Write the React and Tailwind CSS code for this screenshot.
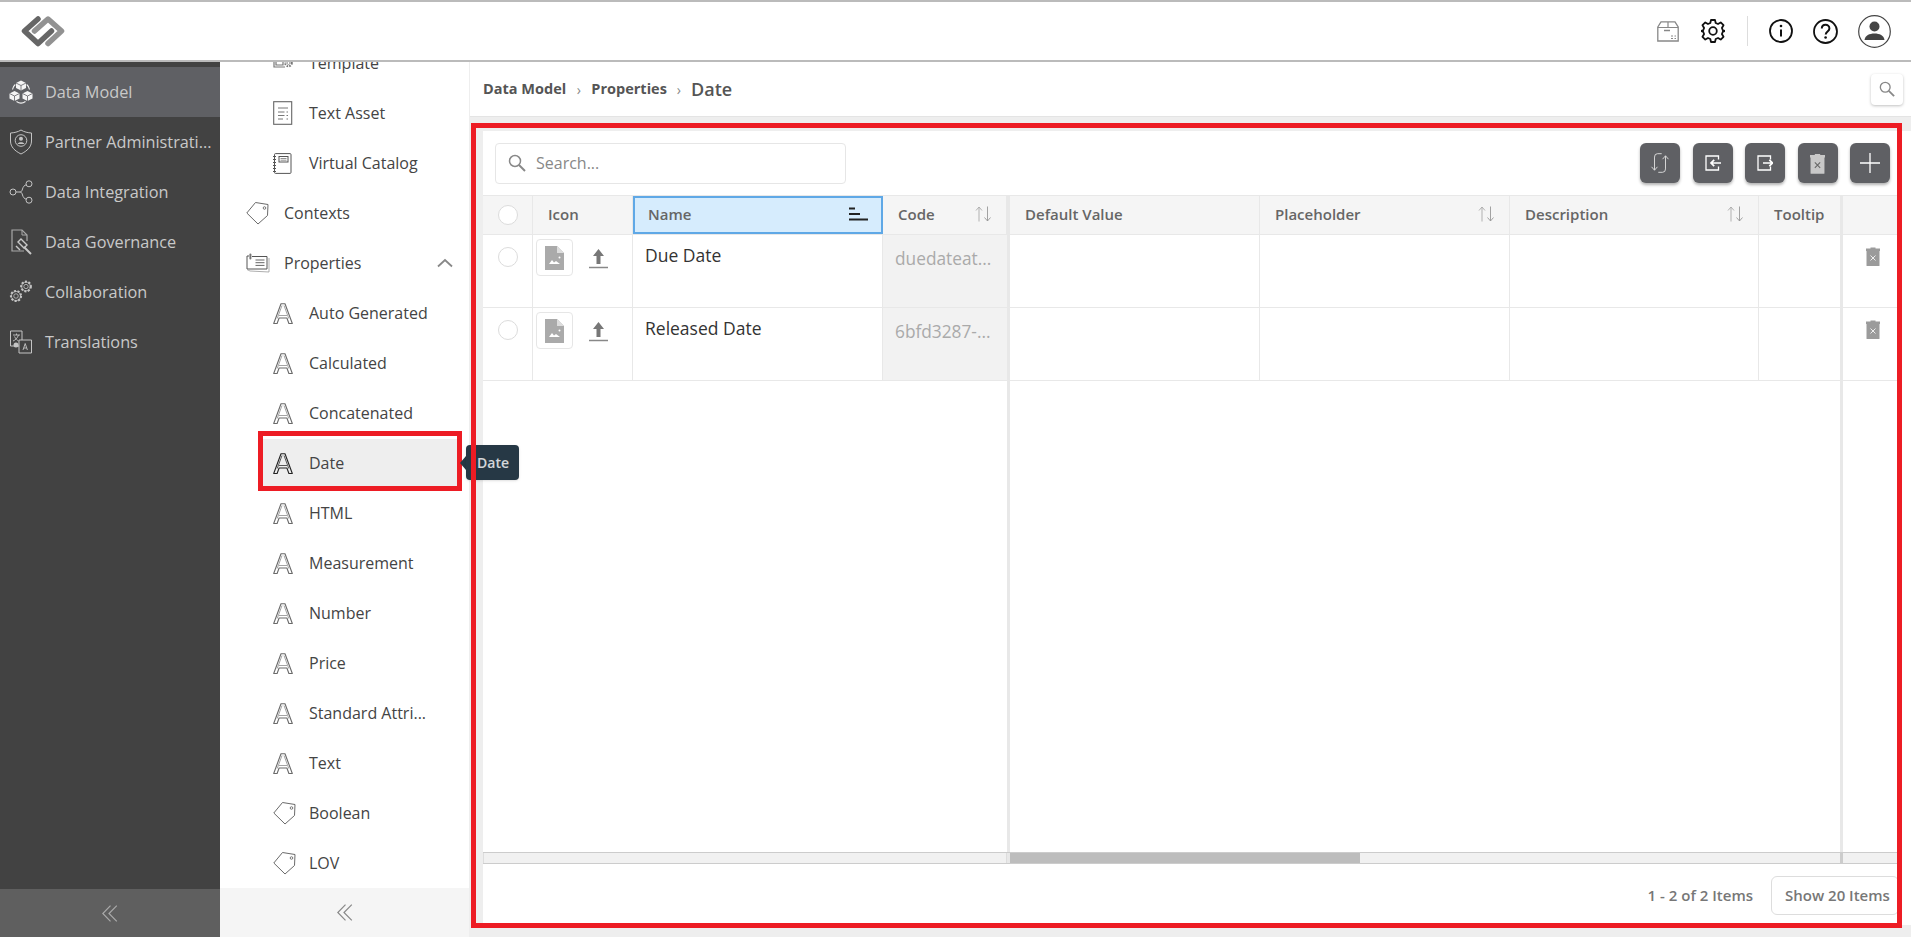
import React from "react";

const S = ({ w, h, vb, children, className = "" }) => (
  <svg width={w} height={h} viewBox={vb} fill="none" className={"shrink-0 " + className}>{children}</svg>
);

const Logo = () => (
  <S w={46} h={32} vb="0 0 46 32">
    <path d="M18 4 4.500 16 18 28.500 31.500 16" stroke="#666" strokeWidth="5.500" strokeLinecap="round" strokeLinejoin="round" />
    <path d="M14.500 16 28 4 41.500 16 28 28.500" stroke="#929292" strokeWidth="5.500" strokeLinecap="round" strokeLinejoin="round" />
  </S>
);

const Cube = ({ x, y }) => (
  <g transform={`translate(${x} ${y})`}>
    <path d="M5 0l5 2.500v5L5 10 0 7.500v-5z" fill="#f4f4f4" />
    <path d="M0 2.500 5 5l5-2.500M5 5v5" stroke="#5f6064" strokeWidth=".8" />
  </g>
);
const IcCubes = () => (
  <S w={24} h={24} vb="0 0 24 24">
    <Cube x={7} y={0.5} />
    <Cube x={0.5} y={11} />
    <Cube x={13.5} y={11} />
    <path d="M3.500 9.500C4 7 5 5.500 6.300 4.500M20.500 9.500C20 7 19 5.500 17.700 4.500M7.500 21.500c3 2.200 6 2.200 9 0" stroke="#f4f4f4" strokeWidth="1.100" />
  </S>
);
const IcShield = () => (
  <S w={24} h={26} vb="0 0 24 26">
    <path d="M12 1c3 2 7 2.800 10.500 3v8c0 6-4.500 10-10.500 13C6 22 1.500 18 1.500 12V4C5 3.800 9 3 12 1z" stroke="#c4c4c4" strokeWidth="1" />
    <circle cx="12" cy="11.500" r="5.800" stroke="#c4c4c4" strokeWidth="1" />
    <circle cx="12" cy="9.800" r="2" fill="#c4c4c4" />
    <path d="M8.600 15c.5-2.300 6.300-2.300 6.800 0z" fill="#c4c4c4" />
  </S>
);
const IcShare = () => (
  <S w={24} h={24} vb="0 0 24 24">
    <circle cx="4" cy="12" r="3" stroke="#c4c4c4" />
    <circle cx="20" cy="3.800" r="3" stroke="#c4c4c4" />
    <circle cx="20" cy="20.200" r="3" stroke="#c4c4c4" />
    <path d="M7 12h3.500c2 0 2.500-1 3-3 .5-2 2-4 3.700-4.200M10.500 12c2 0 2.500 1 3 3 .5 2 2 4 3.700 4.200" stroke="#c4c4c4" />
  </S>
);
const IcGov = () => (
  <S w={24} h={26} vb="0 0 24 26">
    <path d="M15 22H3V1h10l5 5v6" stroke="#a8a8a8" strokeWidth="1.200" />
    <path d="M13 1v5h5" stroke="#a8a8a8" />
    <path d="M12 10l6 6-3 3-6-6z" stroke="#c8c8c8" strokeWidth="1.400" />
    <path d="M15 18l7 7" stroke="#c8c8c8" strokeWidth="2" />
    <path d="M7 17l4 4" stroke="#c8c8c8" strokeWidth="1.500" />
  </S>
);
const Gear = ({ cx, cy, r }) => (
  <g stroke="#c4c4c4">
    <circle cx={cx} cy={cy} r={r} strokeWidth="2.200" strokeDasharray="2 1.500" />
    <circle cx={cx} cy={cy} r={r - 0.4} strokeWidth="0.800" />
    <circle cx={cx} cy={cy} r={r * 0.45} strokeWidth="0.800" />
  </g>
);
const IcCollab = () => (
  <S w={24} h={24} vb="0 0 24 24">
    <Gear cx={7} cy={16} r={5} />
    <Gear cx={17} cy={6.500} r={4.800} />
  </S>
);
const IcTranslate = () => (
  <S w={24} h={24} vb="0 0 24 24">
    <path d="M10 16H1.500V1H13v9" stroke="#c4c4c4" />
    <path d="M10 10h12.500v13H10z" stroke="#c4c4c4" />
    <path d="M4 5h7M7.500 3.500V5M9.500 5C8.500 8 6.500 10 4 11M5.500 6.500c1 2 2.500 3.500 4 4.500" stroke="#c4c4c4" strokeWidth=".9" />
    <path d="M14 20l2.200-6.500 2.200 6.500M14.800 18h2.800" stroke="#c4c4c4" strokeWidth=".9" />
    <circle cx="7" cy="15" r="2.500" fill="#c4c4c4" />
  </S>
);

const IcA = ({ dark }) => {
  const c = dark ? "#222" : "#6a6a6a";
  const d = dark ? "#444" : "#999";
  return (
    <S w={20} h={21} vb="0 0 20 21">
      <path d="M.7 20.500 8 .7h4l7.300 19.800h-3.400l-2-5.500H6.100l-2 5.500z" stroke={c} strokeWidth="1.100" strokeLinejoin="round" />
      <path d="M4.200 15.500l4.800-13M15.800 15.500 11 2.500" stroke={d} strokeWidth=".9" />
      <path d="M6 12.500h8" stroke={d} strokeWidth=".9" />
    </S>
  );
};
const IcTag = () => (
  <S w={24} h={24} vb="0 0 24 24">
    <path d="M.8 12 9.500 1.500l12.500 2-.5 11L12 23z" stroke="#6a6a6a" strokeWidth="1" strokeLinejoin="round" />
    <circle cx="18.500" cy="7" r="1.300" stroke="#6a6a6a" strokeWidth=".9" />
  </S>
);
const IcTemplate = () => (
  <S w={20} h={14} vb="0 0 20 14">
    <path d="M1 0v11h11M3 0v9h7V0" stroke="#777" strokeWidth="1.200" />
    <rect x="5" y="1.500" width="3.500" height="4" stroke="#777" />
    <circle cx="15.500" cy="7" r="3.300" stroke="#777" strokeWidth="2" strokeDasharray="1.600 1.100" />
    <circle cx="15.500" cy="7" r="1.500" stroke="#777" strokeWidth=".7" />
  </S>
);
const IcTextAsset = () => (
  <S w={20} h={24} vb="0 0 20 24">
    <rect x=".7" y=".7" width="18" height="22.600" stroke="#666" strokeWidth="1.100" />
    <path d="M5 7h10M5 11h6.500M13.500 11h1.500M5 14.500h6.500M13.500 14.500h1.500M5 18h5M13.500 18h1.500" stroke="#777" />
  </S>
);
const IcCatalog = () => (
  <S w={19} h={21} vb="0 0 19 21">
    <rect x="1.500" y=".6" width="16.500" height="19.800" rx="1" stroke="#555" />
    <path d="M0 3.500h3M0 6.500h3M0 9.500h3M0 12.500h3M0 15.500h3M0 18.500h3" stroke="#555" />
    <rect x="6" y="3.500" width="9" height="5.500" stroke="#555" />
    <path d="M7.500 5.500h6M7.500 7.200h6" stroke="#777" strokeWidth=".8" />
  </S>
);
const IcProps = () => (
  <S w={24} h={20} vb="0 0 24 20">
    <path d="M3 3H1v13h20V3.500H6" stroke="#555" strokeWidth="1" />
    <path d="M1 16.500l3 1.500 19 1V5" stroke="#999" strokeWidth=".8" />
    <rect x="3.400" y=".5" width="2" height="6" rx="1" fill="#777" />
    <path d="M9.500 7h9M9.500 9.700h9M9.500 12.400h9" stroke="#666" strokeWidth="1" />
  </S>
);
const Chevrons = ({ c }) => (
  <S w={16} h={17} vb="0 0 16 17">
    <path d="M8.500.6.800 8.500l7.700 7.900M14.800.6 7 8.500l7.800 7.900" stroke={c} strokeWidth="1.200" />
  </S>
);

const Glass = ({ c, s = 18 }) => (
  <S w={s} h={s} vb="0 0 18 18">
    <circle cx="7" cy="7" r="5.500" stroke={c} strokeWidth="1.500" />
    <path d="M11 11l6 6" stroke={c} strokeWidth="2" />
  </S>
);

const SortIcon = () => (
  <S w={17} h={16} vb="0 0 17 16">
    <path d="M4 15.500V1M1 4.500 4 1l3 3.500" stroke="#aaa" strokeWidth=".9" />
    <path d="M12.500.5V15M9.500 11.500l3 3.500 3-3.500" stroke="#999" strokeWidth=".9" />
  </S>
);
const SortActive = () => (
  <S w={20} h={14} vb="0 0 20 14">
    <path d="M0 1.500h6M0 7h11M0 12.500h19" stroke="#222" strokeWidth="2" />
  </S>
);

const Trash = ({ c = "#9b9b9b", x = "#eee", w = 14, h = 19 }) => (
  <S w={w} h={h} vb="0 0 14 19">
    <path d="M4.500 1.600V.6h5v1h4.500v2.400H0V1.600z" fill={c} />
    <rect x=".5" y="3" width="13" height="16" rx=".5" fill={c} />
    <path d="M4.500 8.500l5 5M9.500 8.500l-5 5" stroke={x} strokeWidth="1" />
  </S>
);

const Nav = ({ icon, label, active }) => (
  <div className={"flex items-center h-[50px] pl-[9px] gap-[12px] text-[16.250px] text-[#c9c9c9] " + (active ? "bg-[#5f6064]" : "")}>
    {icon}
    <span className="whitespace-nowrap">{label}</span>
  </div>
);

const Sub = ({ icon, label }) => (
  <div className="flex items-center h-[50px] pl-[53px] text-[16px] text-[#444]">
    <span className="w-[36px] flex">{icon}</span>
    <span className="whitespace-nowrap">{label}</span>
  </div>
);
const Top = ({ icon, label, chevron }) => (
  <div className="flex items-center h-[50px] pl-[26px] text-[16px] text-[#444]">
    <span className="w-[38px] flex">{icon}</span>
    <span className="whitespace-nowrap">{label}</span>
    {chevron && (
      <S w={16} h={10} vb="0 0 16 10" className="ml-auto mr-[16px]">
        <path d="M1 8.500 8 2l7 6.500" stroke="#888" strokeWidth="1.800" />
      </S>
    )}
  </div>
);

const cols = "grid grid-cols-[50px_100px_250px_124px_3px_250px_250px_249px_81px_3px_56px]";

const Head = ({ label, sort, last }) => (
  <div className={"flex items-center justify-between pl-[15px] pr-[14px] pb-[2px] text-[15px] font-semibold text-[#666] whitespace-nowrap " + (last ? "" : "border-r border-[#e8e8e8]")}>
    <span>{label}</span>
    {sort && <SortIcon />}
  </div>
);

const Radio = () => <div className="w-[20px] h-[20px] rounded-full border border-[#dcdcdc] bg-white" />;

const ImgFile = () => (
  <S w={19} h={24} vb="0 0 19 24">
    <path d="M0 0h12l7 7v17H0z" fill="#aaa" />
    <path d="M12 0l7 7h-7z" fill="#ddd" />
    <path d="M4 18l3-4 2 2.500 2-1.500 4 3z" fill="#fff" />
    <circle cx="14.500" cy="11.500" r="1" fill="#fff" />
  </S>
);
const Upload = () => (
  <S w={19} h={20} vb="0 0 19 20">
    <path d="M9.500 0 15 7h-3.500v8h-4V7H4z" fill="#777" />
    <path d="M0 18.500h19" stroke="#888" strokeWidth="1.500" />
  </S>
);

const Row = ({ name, code }) => (
  <div className={cols + " h-[73px] border-b border-[#e8e8e8]"}>
    <div className="border-r border-[#e8e8e8] flex justify-center pt-[12px]"><Radio /></div>
    <div className="border-r border-[#e8e8e8] flex pl-[3px] pt-[4px] gap-[16px] items-start">
      <div className="w-[37px] h-[37px] rounded border border-[#e6e6e6] flex items-center justify-center"><ImgFile /></div>
      <div className="pt-[10px]"><Upload /></div>
    </div>
    <div className="border-r border-[#e8e8e8] pl-[12px] pt-[7px] text-[17.500px] text-[#333] whitespace-nowrap">{name}</div>
    <div className="bg-[#f2f2f2] pl-[12px] pt-[11px] text-[17.300px] text-[#aaa] whitespace-nowrap">{code}</div>
    <div className="bg-[#e8e8e8]" />
    <div className="border-r border-[#e8e8e8]" />
    <div className="border-r border-[#e8e8e8]" />
    <div className="border-r border-[#e8e8e8]" />
    <div />
    <div className="bg-[#e8e8e8]" />
    <div className="flex justify-center pt-[12px] pl-[3px]"><Trash /></div>
  </div>
);

const ToolBtn = ({ children }) => (
  <div className="w-[40px] h-[40px] rounded-md bg-[#5f6064] shadow-[0_2px_3px_rgba(0,0,0,0.3)] flex items-center justify-center">{children}</div>
);

export default function App() {
  return (
    <div className="relative h-[937px] w-[1911px] overflow-hidden flex flex-col bg-[#eee] font-['Open_Sans',sans-serif]">
      <header className="h-[62px] shrink-0 bg-white border-t-2 border-b-2 border-t-[#bbb] border-b-[#bbb] flex items-center pl-[20px] pr-[20px]">
        <Logo />
        <div className="ml-auto flex items-center">
          <S w={22} h={21} vb="0 0 22 21">
            <path d="M.8 6 4 .8h14L21.200 6v14H.8z" stroke="#888" strokeWidth="1.300" />
            <path d="M.8 6.500h20.400M11 1v5.500" stroke="#888" strokeWidth="1.200" />
            <path d="M7 9.500h6" stroke="#888" strokeWidth="1.500" />
            <path d="M14 15h2M17.500 15h1.500M14 17.500h2M17.500 17.500h1.500" stroke="#888" />
          </S>
          <S w={24} h={24} vb="0 0 24 24" className="ml-[22px]">
            <path d="M10 1h4l.7 3 2.300 1 2.700-1.600 2.800 2.800L20.900 9l1 2.300 2 .7v0l-2 .7-1 2.300 1.600 2.800-2.800 2.800-2.700-1.600-2.300 1-.7 3h-4l-.7-3-2.300-1-2.700 1.600-2.800-2.800L3.100 15l-1-2.300-2-.7v0l2-.7 1-2.300-1.600-2.800 2.800-2.800L7 5l2.300-1z" stroke="#111" strokeWidth="1.800" strokeLinejoin="round" />
            <circle cx="12" cy="12" r="3.800" stroke="#111" strokeWidth="1.800" />
          </S>
          <div className="ml-[22px] w-px h-[30px] bg-[#ddd]" />
          <S w={24} h={24} vb="0 0 24 24" className="ml-[21px]">
            <circle cx="12" cy="12" r="11" stroke="#111" strokeWidth="1.800" />
            <path d="M12 10.500v7" stroke="#111" strokeWidth="2" />
            <circle cx="12" cy="7" r="1.300" fill="#111" />
          </S>
          <S w={25} h={25} vb="0 0 25 25" className="ml-[20px]">
            <circle cx="12.500" cy="12.500" r="11.500" stroke="#111" strokeWidth="1.800" />
            <path d="M8.800 9.500c0-5 7.600-5 7.600 0 0 3-3.500 3-3.700 6" stroke="#111" strokeWidth="2" />
            <circle cx="12.600" cy="18.500" r="1.300" fill="#111" />
          </S>
          <S w={33} h={33} vb="0 0 33 33" className="ml-[20px]">
            <circle cx="16.500" cy="16.500" r="15.800" stroke="#444" strokeWidth="1.200" />
            <circle cx="16.500" cy="11.500" r="5" fill="#444" />
            <path d="M6.500 25c.5-4.500 5-6.500 10-6.500s9.500 2 10 6.500z" fill="#444" />
          </S>
        </div>
      </header>

      <div className="flex flex-1 min-h-0">
        <aside className="w-[220px] shrink-0 bg-[#424242] flex flex-col pt-[5px]">
          <Nav active icon={<IcCubes />} label="Data Model" />
          <Nav icon={<IcShield />} label="Partner Administrati..." />
          <Nav icon={<IcShare />} label="Data Integration" />
          <Nav icon={<IcGov />} label="Data Governance" />
          <Nav icon={<IcCollab />} label="Collaboration" />
          <Nav icon={<IcTranslate />} label="Translations" />
          <div className="mt-auto h-[48px] bg-[#5f5f5f] flex items-center justify-center"><Chevrons c="#aaa" /></div>
        </aside>

        <nav className="w-[250px] shrink-0 bg-white flex flex-col border-r border-[#eee]">
          <div className="flex-1 min-h-0 overflow-hidden">
            <div className="-mt-[24px]">
              <Sub icon={<IcTemplate />} label="Template" />
              <Sub icon={<IcTextAsset />} label="Text Asset" />
              <Sub icon={<IcCatalog />} label="Virtual Catalog" />
              <Top icon={<IcTag />} label="Contexts" />
              <Top icon={<IcProps />} label="Properties" chevron />
              <Sub icon={<IcA />} label="Auto Generated" />
              <Sub icon={<IcA />} label="Calculated" />
              <Sub icon={<IcA />} label="Concatenated" />
              <div className="relative h-[50px] flex items-center">
                <div className="ml-[43px] mr-[12px] w-[194px] h-[49px] bg-[#eee] pl-[10px] flex items-center text-[16px] text-[#444]">
                  <span className="w-[36px] flex"><IcA dark /></span>
                  <span>Date</span>
                </div>
                <div className="absolute left-[38px] top-[-7px] w-[204px] h-[60px] border-[5px] border-[#ed1c24]" />
              </div>
              <Sub icon={<IcA />} label="HTML" />
              <Sub icon={<IcA />} label="Measurement" />
              <Sub icon={<IcA />} label="Number" />
              <Sub icon={<IcA />} label="Price" />
              <Sub icon={<IcA />} label="Standard Attri..." />
              <Sub icon={<IcA />} label="Text" />
              <Sub icon={<IcTag />} label="Boolean" />
              <Sub icon={<IcTag />} label="LOV" />
            </div>
          </div>
          <div className="h-[49px] shrink-0 bg-[#f5f5f5] flex items-center justify-center"><Chevrons c="#888" /></div>
        </nav>

        <main className="flex-1 min-w-0 flex flex-col">
          <div className="h-[55px] shrink-0 bg-white border-b border-[#e4e4e4] flex items-center pl-[13px] pr-[8px] text-[#555]">
            <span className="text-[14.500px] font-bold">Data Model</span>
            <span className="mx-[10.500px] text-[14px] text-[#888]">›</span>
            <span className="text-[14.500px] font-bold">Properties</span>
            <span className="mx-[10px] text-[14px] text-[#888]">›</span>
            <span className="text-[18px] font-semibold">Date</span>
            <div className="ml-auto w-[32px] h-[31px] rounded bg-white shadow-[0_1px_3px_rgba(0,0,0,0.25)] flex items-center justify-center"><Glass c="#888" s={16} /></div>
          </div>

          <div className="flex-1 min-h-0 pl-[13px] pt-[14px] pb-[12px]">
            <div className="h-full bg-white flex flex-col pr-[12px]">
              <div className="h-[64px] shrink-0 flex items-center pl-[12px] pr-[9px]">
                <div className="w-[351px] h-[41px] border border-[#e6e6e6] rounded-sm flex items-center pl-[12px] gap-[10px]">
                  <Glass c="#888" />
                  <span className="text-[16px] text-[#888]">Search...</span>
                </div>
                <div className="ml-auto flex gap-[12.500px]">
                  <ToolBtn>
                    <S w={20} h={22} vb="0 0 22 26">
                      <path d="M13 2H8Q4.500 2 4.500 6v15.500M1 17.500l3.500 4 3.500-4M9 24h5q3.500 0 3.500-4V4.500M14 8.500l3.500-4 3.500 4" stroke="#ddd" strokeWidth="1.100" />
                    </S>
                  </ToolBtn>
                  <ToolBtn>
                    <S w={16} h={16} vb="0 0 16 16">
                      <path d="M13.500 4.500V1H1v14h12.500v-3.500" stroke="#fff" strokeWidth="1.300" />
                      <path d="M16 8H6M9.200 4.800 6 8l3.200 3.200" stroke="#fff" strokeWidth="1.700" />
                    </S>
                  </ToolBtn>
                  <ToolBtn>
                    <S w={16} h={16} vb="0 0 16 16">
                      <path d="M13.500 4.500V1H1v14h12.500v-3.500" stroke="#fff" strokeWidth="1.300" />
                      <path d="M6 8h9.500M12.300 4.800 15.500 8l-3.200 3.200" stroke="#fff" strokeWidth="1.700" />
                    </S>
                  </ToolBtn>
                  <ToolBtn><Trash c="#c8c8c8" x="#666" w={15} h={21} /></ToolBtn>
                  <ToolBtn>
                    <S w={20} h={20} vb="0 0 20 20">
                      <path d="M10 0v20M0 10h20" stroke="#fff" strokeWidth="1.300" />
                    </S>
                  </ToolBtn>
                </div>
              </div>

              <div className={cols + " h-[40px] shrink-0 bg-[#f5f5f5] border-t border-b border-[#e8e8e8]"}>
                <div className="border-r border-[#e8e8e8] flex items-center justify-center pb-[1px]"><Radio /></div>
                <Head label="Icon" />
                <div className="bg-[#d6ecfd] border-2 border-[#5fa8e6] flex items-center justify-between pl-[13px] pr-[12px] pb-[2px] text-[15px] font-semibold text-[#666]">
                  <span>Name</span>
                  <SortActive />
                </div>
                <Head label="Code" sort />
                <div className="bg-[#e8e8e8]" />
                <Head label="Default Value" />
                <Head label="Placeholder" sort />
                <Head label="Description" sort />
                <Head label="Tooltip" last />
                <div className="bg-[#e8e8e8]" />
                <div />
              </div>

              <Row name="Due Date" code="duedateat..." />
              <Row name="Released Date" code="6bfd3287-..." />

              <div className={cols + " flex-1 min-h-0"}>
                <div className="col-span-4" />
                <div className="bg-[#e8e8e8]" />
                <div className="col-span-4" />
                <div className="bg-[#e8e8e8]" />
                <div />
              </div>

              <div className={cols + " h-[12px] shrink-0 border-t border-b border-[#ccc] bg-[#f1f1f1]"}>
                <div className="col-span-4 border-x border-[#ddd]" />
                <div className="bg-[#e8e8e8]" />
                <div className="col-span-4 flex">
                  <div className="w-[350px] bg-[#bdbdbd]" />
                </div>
                <div className="bg-[#ccc]" />
                <div />
              </div>

              <div className="h-[61px] shrink-0 flex items-center justify-end pt-[2px]">
                <span className="text-[15px] font-semibold text-[#777] mr-[18px]">1 - 2 of 2 Items</span>
                <div className="w-[128px] h-[39px] border border-[#ddd] rounded-md pl-[13px] flex items-center text-[15px] font-semibold text-[#777] whitespace-nowrap">Show 20 Items</div>
              </div>
            </div>
          </div>
        </main>
      </div>

      <div className="absolute left-[471px] top-[123px] w-[1431px] h-[805px] border-[5px] border-[#ed1c24] pointer-events-none" />
      <div className="absolute left-[460px] top-[445px] flex items-center">
        <div className="w-0 h-0 border-y-[7px] border-y-transparent border-r-[6px] border-r-[#263845]" />
        <div className="w-[53px] h-[35px] rounded-sm bg-[#263845] text-white/80 text-[14px] font-semibold flex items-center pl-[11px] shadow">Date</div>
      </div>
      <div className="absolute left-[471px] top-[440px] w-[5px] h-[45px] bg-[#ed1c24]" />
    </div>
  );
}
